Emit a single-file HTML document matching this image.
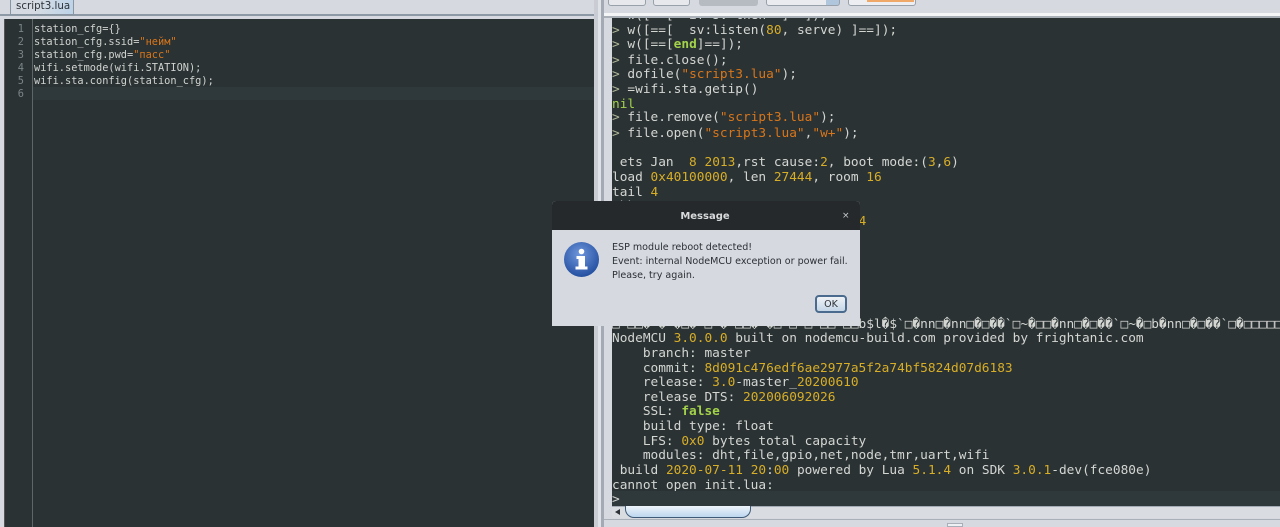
<!DOCTYPE html>
<html><head><meta charset="utf-8"><style>
html,body{margin:0;padding:0;width:1280px;height:527px;overflow:hidden;background:#d6d9df}
div,span.a{position:absolute;box-sizing:border-box}
#root{left:0;top:0;width:1280px;height:527px;overflow:hidden;background:#d6d9df;filter:blur(.35px)}
.m{font-family:"DejaVu Sans Mono","Liberation Mono",monospace;white-space:pre}
#ed .l{position:absolute;left:34px;font-size:10.3px;line-height:13px;height:13px;color:#d0d3cf}
#ed .n{position:absolute;left:0;width:24px;text-align:right;font-size:10.3px;line-height:13px;color:#7b8488}
#c .l{position:absolute;left:0;font-size:12.8px;line-height:15px;height:15px;color:#d4d6d2}
.y{color:#d8ae27}.s{color:#d9761a}.g{color:#a3d24a;font-weight:bold}.p{color:#b3b89a}
.d{font-family:"DejaVu Sans","Liberation Sans",sans-serif;white-space:pre}
</style></head><body><div id="root">
<!-- top left tab -->
<div style="left:0;top:14px;width:594px;height:2px;background:#8e99a6"></div>
<div style="left:10px;top:0;width:64px;height:15px;background:linear-gradient(100deg,#d6dbe3 40%,#bcd3e8);border:1px solid #8a95a3;border-top:0"></div>
<div class="d" style="left:16px;top:0;font-size:10.3px;line-height:13px;color:#2c3238">script3.lua</div>
<!-- editor -->
<div style="left:4px;top:19px;width:590px;height:508px;background:#2a3234;border-left:1px solid #555"></div>
<div style="left:32px;top:19px;width:1px;height:508px;background:#5e6669"></div>
<div style="left:33px;top:87px;width:561px;height:13px;background:#2f393b"></div>
<div id="ed" class="m" style="left:0;top:0;width:594px;height:527px">
<span class="n" style="top:23px">1</span><span class="n" style="top:36px">2</span><span class="n" style="top:49px">3</span><span class="n" style="top:62px">4</span><span class="n" style="top:75px">5</span><span class="n" style="top:88px">6</span>
<span class="l" style="top:23px">station_cfg={}</span>
<span class="l" style="top:36px">station_cfg.ssid=<span class="s">"нейм"</span></span>
<span class="l" style="top:49px">station_cfg.pwd=<span class="s">"пасс"</span></span>
<span class="l" style="top:62px">wifi.setmode(wifi.STATION);</span>
<span class="l" style="top:75px">wifi.sta.config(station_cfg);</span>
</div>
<!-- splitter -->
<div style="left:594px;top:0;width:4px;height:527px;background:#c9cdd3"></div>
<div style="left:598px;top:0;width:3px;height:527px;background:#dfe2e6"></div>
<div style="left:601px;top:0;width:3px;height:527px;background:#a4aab3"></div>
<!-- top right buttons -->
<div style="left:608px;top:-8px;width:38px;height:14px;background:#e6e8ec;border:1px solid #98a0aa;border-radius:3px"></div>
<div style="left:653px;top:-8px;width:37px;height:14px;background:#e6e8ec;border:1px solid #98a0aa;border-radius:3px"></div>
<div style="left:699px;top:-8px;width:59px;height:14px;background:#b6bac1;border-radius:3px"></div>
<div style="left:766px;top:-8px;width:74px;height:14px;background:linear-gradient(90deg,#e9ebef 82%,#b0c6dc 82%);border:1px solid #98a0aa;border-radius:3px"></div>
<div style="left:848px;top:-8px;width:68px;height:14px;background:#eceef1;border:1px solid #98a0aa;border-radius:3px"></div>
<div style="left:867px;top:0;width:47px;height:2px;background:#f0a868"></div>
<div style="left:604px;top:13px;width:676px;height:3px;background:#f4f5f7"></div>
<div style="left:604px;top:16px;width:676px;height:2px;background:#aab0b8"></div>
<!-- console -->
<div id="c" class="m" style="left:612px;top:18px;width:668px;height:488px;background:#2a3234;overflow:hidden">
<span class="l" style="top:-10px">  w([==[  if sv then  ]==]);</span>
<span class="l" style="top:5px"><span class="p">&gt;</span> w([==[  sv:listen(<span class="y">80</span>, serve) ]==]);</span>
<span class="l" style="top:19px"><span class="p">&gt;</span> w([==[<span class="g">end</span>]==]);</span>
<span class="l" style="top:35px"><span class="p">&gt;</span> file.close();</span>
<span class="l" style="top:49px"><span class="p">&gt;</span> dofile(<span class="s">"script3.lua"</span>);</span>
<span class="l" style="top:64px"><span class="p">&gt;</span> =wifi.sta.getip()</span>
<span class="l g" style="top:79px;font-weight:normal;color:#a3d24a">nil</span>
<span class="l" style="top:92px"><span class="p">&gt;</span> file.remove(<span class="s">"script3.lua"</span>);</span>
<span class="l" style="top:108px"><span class="p">&gt;</span> file.open(<span class="s">"script3.lua"</span>,<span class="s">"w+"</span>);</span>
<span class="l" style="top:137px"> ets Jan  <span class="y">8</span> <span class="y">2013</span>,rst cause:<span class="y">2</span>, boot mode:(<span class="y">3</span>,<span class="y">6</span>)</span>
<span class="l" style="top:152px">load <span class="y">0x40100000</span>, len <span class="y">27444</span>, room <span class="y">16</span></span>
<span class="l" style="top:167px">tail <span class="y">4</span></span>
<span class="l" style="top:181px">chksum <span class="y">0x14</span></span>
<span class="l" style="top:196px">load <span class="y">0x3ffe8000</span>, len <span class="y">2124</span>, room <span class="y">4</span></span>
<span class="l" style="top:299px">□~□□�~�~�□�~□~�~□□�~�□~□~□~□□~□□b$l�$`□�nn□�nn□�□��`□~�□□�nn□�□��`□~�□b�nn□�□��`□�□□□□□�</span>
<span class="l" style="top:313px">NodeMCU <span class="y">3.0.0.0</span> built on nodemcu-build.com provided by frightanic.com</span>
<span class="l" style="top:328px">    branch: master</span>
<span class="l" style="top:343px">    commit: <span class="y">8d091c476edf6ae2977a5f2a74bf5824d07d6183</span></span>
<span class="l" style="top:357px">    release: <span class="y">3.0</span>-master_<span class="y">20200610</span></span>
<span class="l" style="top:372px">    release DTS: <span class="y">202006092026</span></span>
<span class="l" style="top:386px">    SSL: <span class="g">false</span></span>
<span class="l" style="top:401px">    build type: float</span>
<span class="l" style="top:416px">    LFS: <span class="y">0x0</span> bytes total capacity</span>
<span class="l" style="top:430px">    modules: dht,file,gpio,net,node,tmr,uart,wifi</span>
<span class="l" style="top:445px"> build <span class="y">2020-07-11</span> <span class="y">20</span>:<span class="y">00</span> powered by Lua <span class="y">5.1.4</span> on SDK <span class="y">3.0.1</span>-dev(fce080e)</span>
<span class="l" style="top:460px">cannot open init.lua:</span>
<div style="left:0;top:473px;width:668px;height:15px;background:#2f393b"></div>
<span class="l p" style="top:474px">&gt;</span>
</div>
<!-- scrollbar -->
<div style="left:612px;top:506px;width:668px;height:12px;background:#d9dce1;border-top:1px solid #a4abb4"></div>
<div style="left:615px;top:509px;width:0;height:0;border-top:3px solid transparent;border-bottom:3px solid transparent;border-right:5px solid #2c3238"></div>
<div style="left:625px;top:506px;width:126px;height:12px;background:linear-gradient(#eef4fa,#bcd6ee);border:1px solid #3f5a76;border-top:0;border-radius:0 0 9px 9px"></div>
<div style="left:604px;top:519px;width:676px;height:1px;background:#aab0b8"></div>
<div style="left:947px;top:523px;width:16px;height:4px;background:#eef0f3;border:1px solid #a9afb8"></div>
<!-- dialog -->
<div style="left:552px;top:201px;width:308px;height:125px;background:#d6d9e0;border-radius:4px 4px 0 0;overflow:hidden">
<div style="left:0;top:0;width:308px;height:29px;background:#25292b"></div>
<div class="d" style="left:0;top:7px;width:308px;text-align:center;padding-right:2px;font-weight:bold;font-size:10px;line-height:18px;color:#d8dadc">Message</div>
<div class="d" style="left:290px;top:7px;font-size:9px;line-height:16px;color:#c8cacc">×</div>
<svg style="position:absolute;left:12px;top:41px" width="35" height="35" viewBox="0 0 35 35">
<defs><radialGradient id="b" cx="45%" cy="35%" r="70%"><stop offset="0" stop-color="#6f97dc"/><stop offset="1" stop-color="#1f4a9c"/></radialGradient></defs>
<circle cx="17.5" cy="17.5" r="17.5" fill="url(#b)"/>
<circle cx="17.5" cy="9.5" r="2.8" fill="#fff"/>
<path d="M12.5 14h8.5v10.5h2.5v3H11.5v-3h3v-7.5h-2z" fill="#fff"/>
</svg>
<div class="d" style="left:60px;top:40px;font-size:9.55px;line-height:14px;color:#2c3035">ESP module reboot detected!
Event: internal NodeMCU exception or power fail.
Please, try again.</div>
<div class="d" style="left:263px;top:94px;width:32px;height:18px;background:linear-gradient(#eef2f6,#c4d6e8);border:2px solid #4a6a8e;border-radius:4px;text-align:center;font-size:9.5px;line-height:15px;color:#2c3035">OK</div>
</div>
</div></body></html>
